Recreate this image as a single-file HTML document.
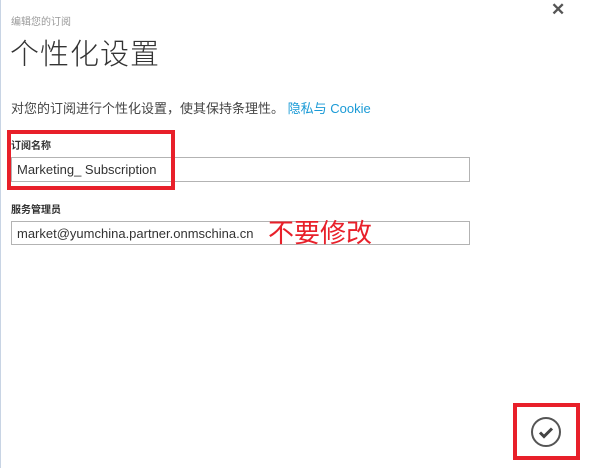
<html><head><style>
body{margin:0;width:592px;height:468px;background:#fff;position:relative;overflow:hidden;font-family:"Liberation Sans","Noto Sans CJK SC",sans-serif;}
.a{position:absolute;white-space:nowrap}
.inp{position:absolute;left:11px;width:459px;height:23px;border:1px solid #b3b3b3;font-size:13px;color:#333;line-height:23px;box-sizing:border-box;padding-left:5px}
</style></head><body>
<div class="a" style="left:0;top:0;width:1px;height:468px;background:#c8d4e4"></div>
<div class="a" style="left:11px;top:13px;font-size:10px;color:#999">编辑您的订阅</div>
<div class="a" style="left:10px;top:31px;font-size:29px;color:#333;font-weight:300;letter-spacing:1px">个性化设置</div>
<div class="a" style="left:551px;top:0px;font-size:17px;color:#555;font-weight:bold">✕</div>
<div class="a" style="left:11px;top:98px;font-size:13px;color:#444">对您的订阅进行个性化设置，使其保持条理性。 <span style="color:#1a9ad6">隐私与 Cookie</span></div>
<div class="a" style="left:11px;top:137px;font-size:10px;color:#333;font-weight:bold">订阅名称</div>
<div class="inp" style="top:157px;height:25px;line-height:23px">Marketing_ Subscription</div>
<div class="a" style="left:7px;top:130px;width:160px;height:52px;border:4px solid #e8202a"></div>
<div class="a" style="left:11px;top:201px;font-size:10px;color:#333;font-weight:bold">服务管理员</div>
<div class="inp" style="top:221px;height:24px">market@yumchina.partner.onmschina.cn</div>
<div class="a" style="left:268px;top:218px;font-size:26px;color:#e8202a;line-height:30px">不要修改</div>
<div class="a" style="left:513px;top:403px;width:59px;height:49px;border:4px solid #e8202a"></div>
<svg class="a" style="left:530px;top:416px" width="32" height="32" viewBox="0 0 32 32"><circle cx="16" cy="16" r="14" fill="none" stroke="#555" stroke-width="2"/><path d="M10 16.5l4 4 8-8" fill="none" stroke="#444" stroke-width="3"/></svg>
</body></html>
